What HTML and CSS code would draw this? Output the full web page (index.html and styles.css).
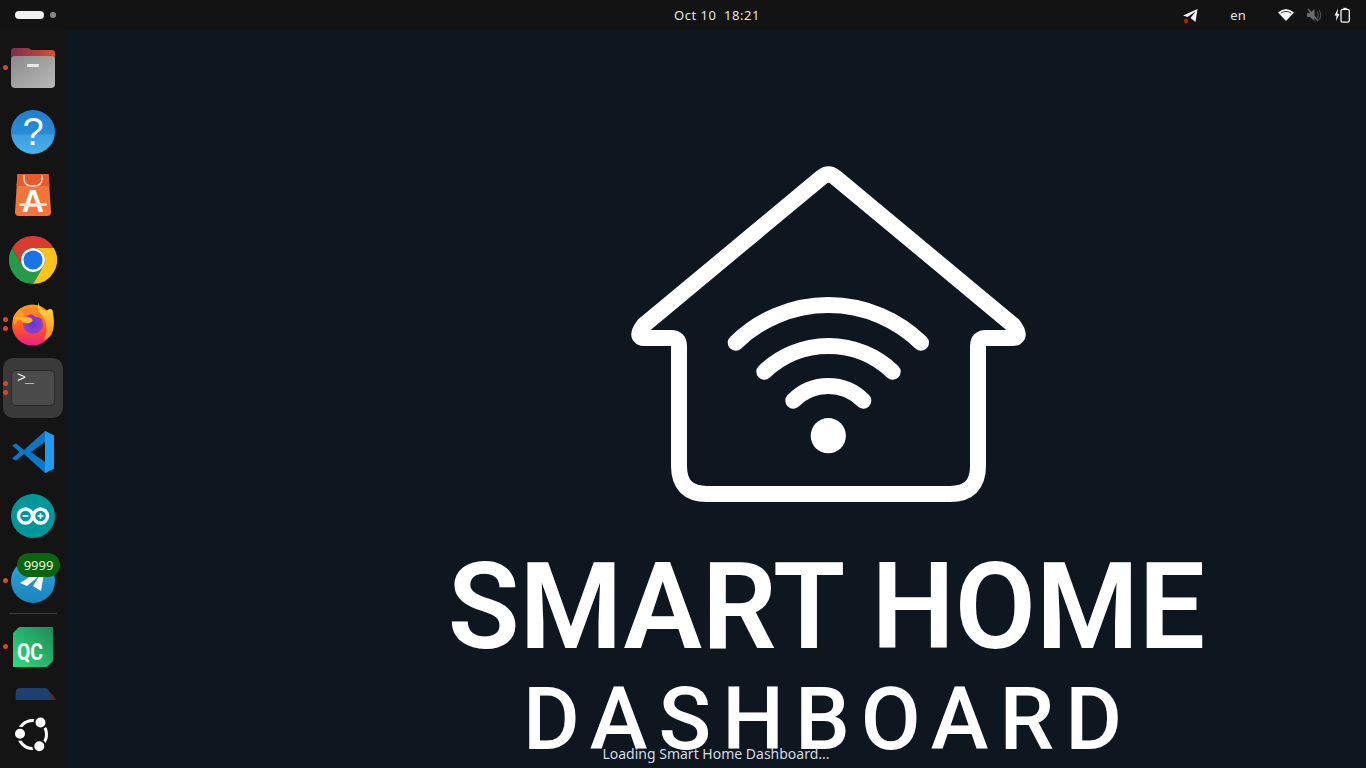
FILE: index.html
```html
<!DOCTYPE html>
<html lang="en">
<head>
    <meta charset="UTF-8">
    <title>Smart Home Dashboard</title>
    <link rel="stylesheet" href="styles.css">
</head>
<body>
    <header class="topbar">
        <div class="workspaces">
            <span class="workspace-pill"></span>
            <span class="workspace-dot"></span>
        </div>
        <div class="clock">Oct 10  18:21</div>
        <div class="indicators">
            <svg class="tray-icon" viewBox="0 0 16 16">
                <path d="M1 8.500 15.500 2 13.500 15 8.500 11 13.500 4.500 5.500 10Z" fill="#f2f2f2"/>
                <circle cx="4" cy="14" r="2.200" fill="#d01010"/>
            </svg>
            <span class="lang">en</span>
            <div class="status">
                <svg class="tray-icon" viewBox="0 0 16 16">
                    <path d="M0 5.500Q8-1.500 16 5.500L8 14Z" fill="#f4f4f4"/>
                    <path d="M2.800 6.200Q8 2.600 13.200 6.200" fill="none" stroke="#121212" stroke-width=".8"/>
                </svg>
                <svg class="tray-icon" viewBox="0 0 16 16">
                    <path d="M1 6H4L8.500 2V14L4 10H1Z" fill="#6a6a6a"/>
                    <path d="M11 4.500Q13.500 8 11 11.500M13 3Q16.500 8 13 13" fill="none" stroke="#4d4d4d" stroke-width="1.200"/>
                    <path d="M2 2 12 14" stroke="#6a6a6a" stroke-width="1.500"/>
                </svg>
                <svg class="tray-icon" viewBox="0 0 16 16">
                    <path d="M4 1.500 .5 8.500H2.500L2 14 5.500 7H3.500Z" fill="#f4f4f4"/>
                    <rect x="7" y="2.400" width="8.300" height="12.800" rx="1.800" fill="none" stroke="#f4f4f4" stroke-width="1.300"/>
                    <rect x="9.500" y=".8" width="3.200" height="1.800" fill="#f4f4f4"/>
                </svg>
            </div>
        </div>
    </header>

    <div class="desktop">
        <nav class="dock">
            <div class="dock-item">
                <span class="run-dots"><i></i></span>
                <svg class="app-icon" viewBox="0 0 48 48">
                    <defs>
                        <linearGradient id="folderBack" x1="0" x2="1" y1="0" y2="0"><stop offset="0" stop-color="#7c2b52"/><stop offset="1" stop-color="#d9512c"/></linearGradient>
                        <linearGradient id="folderBody" x1="0" x2="1" y1="0" y2="1"><stop offset="0" stop-color="#8b8b8b"/><stop offset="1" stop-color="#b9b9b9"/></linearGradient>
                    </defs>
                    <path d="M2 20V8Q2 5 5 5H18Q20 5 21 6L22.500 7H43Q46 7 46 10V20Z" fill="url(#folderBack)"/>
                    <rect x="2" y="13" width="44" height="32" rx="4" fill="url(#folderBody)"/>
                    <rect x="18" y="21" width="12" height="3" rx="1" fill="#e8e8e8"/>
                </svg>
            </div>
            <div class="dock-item">
                <svg class="app-icon" viewBox="0 0 48 48">
                    <defs>
                        <linearGradient id="helpBlue" x1="0" x2="0" y1="0" y2="1"><stop offset="0" stop-color="#1f7fd0"/><stop offset=".55" stop-color="#2a8bd8"/><stop offset=".56" stop-color="#3a9de2"/><stop offset="1" stop-color="#4ab2ea"/></linearGradient>
                    </defs>
                    <circle cx="24" cy="25" r="22" fill="url(#helpBlue)"/>
                    <text x="24" y="38" class="help-mark">?</text>
                </svg>
            </div>
            <div class="dock-item">
                <svg class="app-icon" viewBox="0 0 48 48">
                    <path d="M8.500 3H39.500L42 41Q42 45 38 45H10Q6 45 6 41Z" fill="#f4743a"/>
                    <path d="M8.500 3H39.500L40.500 15H7.500Z" fill="#e95a2c"/>
                    <path d="M15 4V8Q15 15 24 15 33 15 33 8V4" fill="none" stroke="#fff" stroke-width="1.400" opacity=".9"/>
                    <text x="24" y="41" class="store-mark">A</text>
                    <rect x="10" y="32" width="28" height="3" rx="1.500" fill="#fbe6da"/>
                </svg>
            </div>
            <div class="dock-item">
                <svg class="app-icon" viewBox="0 0 48 48">
                    <path d="M3.200 12A24 24 0 0 1 44.800 12H24A12 12 0 0 0 13.600 30Z" fill="#db3a2e"/>
                    <path d="M3.200 12A24 24 0 0 0 24 48L34.400 30A12 12 0 0 1 13.600 30Z" fill="#259a48"/>
                    <path d="M44.800 12A24 24 0 0 1 24 48L34.400 30A12 12 0 0 0 24 12Z" fill="#fcc31a"/>
                    <circle cx="24" cy="24" r="12" fill="#fff"/>
                    <circle cx="24" cy="24" r="9.500" fill="#1a73e8"/>
                </svg>
            </div>
            <div class="dock-item">
                <span class="run-dots"><i></i><i></i></span>
                <svg class="app-icon" viewBox="0 0 48 48">
                    <defs>
                        <linearGradient id="foxBody" x1="0" x2="0" y1="0" y2="1"><stop offset="0" stop-color="#ff9a1c"/><stop offset=".65" stop-color="#ff4a30"/><stop offset="1" stop-color="#e8208c"/></linearGradient>
                        <linearGradient id="foxFlame" x1="0" x2="0" y1="0" y2="1"><stop offset="0" stop-color="#ffe14a"/><stop offset="1" stop-color="#ff8a1c"/></linearGradient>
                        <radialGradient id="foxGlobe"><stop offset="0" stop-color="#5b3bd8"/><stop offset="1" stop-color="#9a3cc4"/></radialGradient>
                    </defs>
                    <circle cx="23.500" cy="25" r="20.500" fill="url(#foxBody)"/>
                    <path d="M29 2Q30 9 37 11 44 6 44 14 46 22 44 30 42 38 35 40 40 28 35 18 28 12 29 2Z" fill="url(#foxFlame)"/>
                    <path d="M4 18Q7 11 12 8 12 13 17 14 10 18 5 26Z" fill="#ff9a20"/>
                    <circle cx="24" cy="24" r="10" fill="url(#foxGlobe)"/>
                    <path d="M6 18Q14 15 22 18 26 21 20 23 14 24 12 20Z" fill="#ffb52a"/>
                    <path d="M22 14Q33 12 35 22 33 17 27 17Z" fill="#ff7a2a"/>
                </svg>
            </div>
            <div class="dock-item is-active">
                <span class="run-dots"><i></i><i></i></span>
                <div class="terminal-icon"><span class="terminal-prompt">&gt;_</span></div>
            </div>
            <div class="dock-item">
                <svg class="app-icon" viewBox="0 0 48 48">
                    <path fill-rule="evenodd" d="M36 3 15 22 7 15.500 3 17.500 10.500 24 3 30.500 7 32.500 15 26 36 45 45 40.500V7.500ZM36 14 22 24 36 34Z" fill="#0a78c6"/>
                    <path d="M36 3 45 7.500V40.500L36 45Z" fill="#1f9cf0"/>
                </svg>
            </div>
            <div class="dock-item">
                <svg class="app-icon" viewBox="0 0 48 48">
                    <circle cx="24" cy="24" r="22" fill="#00979c"/>
                    <circle cx="16.500" cy="24" r="7" fill="none" stroke="#fff" stroke-width="3.400"/>
                    <circle cx="31.500" cy="24" r="7" fill="none" stroke="#fff" stroke-width="3.400"/>
                    <path d="M13.500 24H19.500M28.500 24H34.500M31.500 21V27" stroke="#fff" stroke-width="1.600"/>
                </svg>
            </div>
            <div class="dock-item">
                <span class="run-dots"><i></i></span>
                <svg class="app-icon" viewBox="0 0 48 48">
                    <defs>
                        <linearGradient id="tgBlue" x1="0" x2="0" y1="0" y2="1"><stop offset="0" stop-color="#2ba5dc"/><stop offset="1" stop-color="#1c84bd"/></linearGradient>
                    </defs>
                    <circle cx="24" cy="24" r="22" fill="url(#tgBlue)"/>
                    <path d="M11 26 36 10 32 34 24 29 31 18 18 29Z" fill="#fff"/>
                </svg>
                <span class="count-badge">9999</span>
            </div>
            <div class="dock-separator"></div>
            <div class="dock-item">
                <span class="run-dots"><i></i></span>
                <svg class="app-icon" viewBox="0 0 48 48">
                    <defs>
                        <linearGradient id="qcGreen" x1="0" x2="1" y1="1" y2="0"><stop offset="0" stop-color="#2fdc80"/><stop offset="1" stop-color="#1e8a58"/></linearGradient>
                    </defs>
                    <path d="M10 4H44V38L38 44H4V10Z" fill="url(#qcGreen)"/>
                    <text x="8" y="37" class="qc-mark" textLength="26" lengthAdjust="spacingAndGlyphs">QC</text>
                </svg>
            </div>
            <div class="dock-stub">
                <svg class="stub-icon" viewBox="0 0 44 13">
                    <path d="M32 13 38 5 44 13Z" fill="#6a2420"/>
                    <path d="M0 13V5Q0 0 5 0H31Q36 0 38 8L39 13Z" fill="#1e3f70"/>
                </svg>
            </div>
            <div class="dock-item dock-launcher">
                <svg class="app-icon" viewBox="0 0 48 48">
                    <circle cx="23.500" cy="23.500" r="14" fill="none" stroke="#fff" stroke-width="3"/>
                    <g fill="#fff" stroke="#141414" stroke-width="2">
                        <circle cx="31.500" cy="11.500" r="6"/>
                        <circle cx="11" cy="22.700" r="6"/>
                        <circle cx="30.300" cy="35.300" r="6"/>
                    </g>
                </svg>
            </div>
        </nav>

        <main class="splash">
            <svg class="logo" viewBox="628 164 401 340">
                <path class="logo-line" d="M950 494H707Q679 494 679 466V346Q679 338 671 338H645Q634 338 644 325L822 177Q828.500 172 835 177L1013 325Q1023 338 1012 338H986Q978 338 978 346V466Q978 494 950 494Z"/>
                <path class="logo-line" d="M735.700 342.700A132.600 132.600 0 0 1 921 342.700"/>
                <path class="logo-line" d="M764.300 371.700A93 93 0 0 1 892.700 371.700"/>
                <path class="logo-line" d="M793.300 400.700A49 49 0 0 1 863.300 400.700"/>
                <circle cx="828.300" cy="435.700" r="17.600" fill="#fff"/>
            </svg>
            <h1 class="title">SMART HOME</h1>
            <h2 class="subtitle">DASHBOARD</h2>
            <div class="loading">Loading Smart Home Dashboard...</div>
        </main>
    </div>
</body>
</html>
```

FILE: styles.css
```css
body {
    margin: 0;
    width: 1366px;
    height: 768px;
    overflow: hidden;
    background-color: #0e161f;
    font-family: "Noto Sans", sans-serif;
}
.topbar {
    height: 30px;
    display: grid;
    grid-template-columns: 674px auto 1fr;
    align-items: center;
    background-color: #131313;
    color: #e4e4e4;
    font-size: 13px;
}
.workspaces {
    display: flex;
    align-items: center;
    gap: 6px;
    padding-left: 15px;
}
.workspace-pill {
    width: 29px;
    height: 8px;
    border-radius: 4px;
    background-color: #f2f2f2;
}
.workspace-dot {
    width: 6px;
    height: 6px;
    border-radius: 50%;
    background-color: #888;
}
.clock {
    white-space: pre;
    letter-spacing: 0.5px;
}
.indicators {
    display: flex;
    justify-content: flex-end;
    align-items: center;
    gap: 32px;
    padding-right: 16px;
}
.status {
    display: flex;
    align-items: center;
    gap: 12px;
}
.tray-icon {
    width: 16px;
    height: 16px;
    display: block;
}
.lang {
    width: 16px;
    text-align: center;
}
.desktop {
    height: 738px;
    display: flex;
}
.dock {
    width: 66px;
    flex-shrink: 0;
    box-sizing: border-box;
    padding-top: 5px;
    display: flex;
    flex-direction: column;
    background-color: #141414;
}
.dock-item {
    position: relative;
    height: 64.2px;
    flex-shrink: 0;
    display: flex;
    justify-content: center;
    align-items: center;
}
.app-icon {
    width: 48px;
    height: 48px;
    display: block;
}
.run-dots {
    position: absolute;
    left: 3px;
    top: 0;
    bottom: 0;
    display: flex;
    flex-direction: column;
    justify-content: center;
    gap: 4px;
}
.run-dots i {
    width: 5px;
    height: 5px;
    border-radius: 50%;
    background-color: #d9481c;
}
.is-active::before {
    content: "";
    position: absolute;
    left: 3px;
    top: 2px;
    width: 60px;
    height: 60px;
    border-radius: 10px;
    background-color: #3a3a3a;
}
.is-active .run-dots {
    z-index: 1;
}
.terminal-icon {
    position: relative;
    box-sizing: border-box;
    width: 44px;
    height: 36px;
    padding: 0 0 0 5px;
    border: 1px solid #2b2b2b;
    border-radius: 5px;
    background-color: #4b4b4b;
}
.terminal-prompt {
    display: block;
    color: #f2f2f2;
    font-family: "Liberation Mono", monospace;
    font-size: 15px;
    line-height: 16px;
    letter-spacing: -1px;
}
.count-badge {
    position: absolute;
    left: 17px;
    top: 4px;
    width: 43px;
    height: 24px;
    border-radius: 12px;
    background-color: #0b6410;
    color: #eef4dc;
    font-size: 13px;
    line-height: 24px;
    text-align: center;
}
.dock-separator {
    height: 1px;
    margin: 0 9px 1px;
    flex-shrink: 0;
    background-color: #3d3d3d;
}
.dock-stub {
    height: 21px;
    margin-top: 9px;
    flex-shrink: 0;
    padding-left: 15px;
}
.stub-icon {
    width: 42px;
    height: 12px;
    display: block;
}
.dock-launcher {
    height: 46px;
    margin-top: 3px;
}
.help-mark {
    fill: #fff;
    font-family: "Liberation Sans", sans-serif;
    font-size: 38px;
    text-anchor: middle;
}
.store-mark {
    fill: #fff;
    font-family: "Liberation Sans", sans-serif;
    font-size: 31px;
    font-weight: 700;
    text-anchor: middle;
}
.qc-mark {
    fill: #fff;
    font-family: Roboto, sans-serif;
    font-size: 23px;
    font-weight: 700;
}
.splash {
    position: relative;
    flex: 1;
    box-sizing: border-box;
    padding: 134px 0 0 224px;
    display: flex;
    flex-direction: column;
    align-items: center;
    background-color: #0e161f;
}
.logo {
    width: 401px;
    height: 340px;
    display: block;
    flex-shrink: 0;
}
.logo-line {
    fill: none;
    stroke: #fff;
    stroke-width: 16;
    stroke-linecap: round;
    stroke-linejoin: round;
}
.title {
    margin: 43px 0 0 -3px;
    color: #fff;
    font-family: Roboto, sans-serif;
    font-size: 120px;
    font-weight: 600;
    line-height: 1;
    white-space: nowrap;
    transform: scaleX(0.98);
}
.subtitle {
    margin: 9px 0 0;
    color: #fff;
    font-family: Roboto, sans-serif;
    font-size: 87px;
    font-weight: 500;
    line-height: 1;
    letter-spacing: 11px;
    white-space: nowrap;
}
.loading {
    position: absolute;
    left: 0;
    right: 0;
    bottom: 5px;
    color: #d4dbe4;
    font-size: 14px;
    line-height: 18px;
    text-align: center;
}
```
